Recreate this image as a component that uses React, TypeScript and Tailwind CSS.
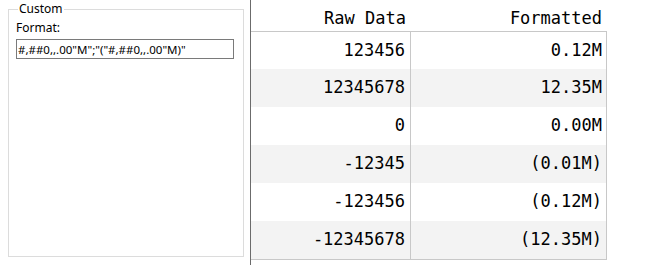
const rows = [
  { raw: "123456", formatted: "0.12M" },
  { raw: "12345678", formatted: "12.35M" },
  { raw: "0", formatted: "0.00M" },
  { raw: "-12345", formatted: "(0.01M)" },
  { raw: "-123456", formatted: "(0.12M)" },
  { raw: "-12345678", formatted: "(12.35M)" },
];

export default function App() {
  return (
    <div className="flex h-[265px] w-[648px] overflow-hidden bg-white">
      {/* Left: format options */}
      <div className="w-[250px] shrink-0 pl-2 pr-[6px] pt-px font-['Noto_Sans',sans-serif] text-[12px] text-black">
        <fieldset className="h-[256px] border border-[#dcdcdc] px-[7px]">
          <legend className="ml-[2px] px-[1px] leading-[16px]">Custom</legend>
          <div className="mt-[3px] leading-[16px]">Format:</div>
          <input
            readOnly
            value={'#,##0,,.00"M";"("#,##0,,.00"M)"'}
            className="mt-[3px] h-[20px] w-[218px] border border-[#7a7a7a] px-[1px] text-[11.5px] leading-[18px] text-black outline-none"
          />
        </fieldset>
      </div>

      {/* Splitter */}
      <div className="w-px shrink-0 bg-[#6b6b6b]" />

      {/* Grid */}
      <div className="w-[356px] shrink-0 font-['DejaVu_Sans_Mono',monospace] text-[17px] text-black">
        <div className="flex h-[32px] items-end border-b border-[#c8c8c8] pb-[3px]">
          <div className="w-[160px] pr-[5px] text-right leading-[20px]">Raw Data</div>
          <div className="w-[196px] pr-[5px] text-right leading-[20px]">Formatted</div>
        </div>
        <div className="border-r border-b border-[#c8c8c8]">
          {rows.map((r, i) => (
            <div
              key={r.raw}
              className={`flex items-center ${i === 0 ? "h-[37px]" : "h-[38px]"} ${
                i % 2 === 1 ? "bg-[#f3f3f3]" : "bg-white"
              }`}
            >
              <div className="flex h-full w-[160px] items-center justify-end border-r border-[#c8c8c8] pr-[5px]">
                {r.raw}
              </div>
              <div className="flex h-full flex-1 items-center justify-end pr-[4px]">{r.formatted}</div>
            </div>
          ))}
        </div>
      </div>
    </div>
  );
}
